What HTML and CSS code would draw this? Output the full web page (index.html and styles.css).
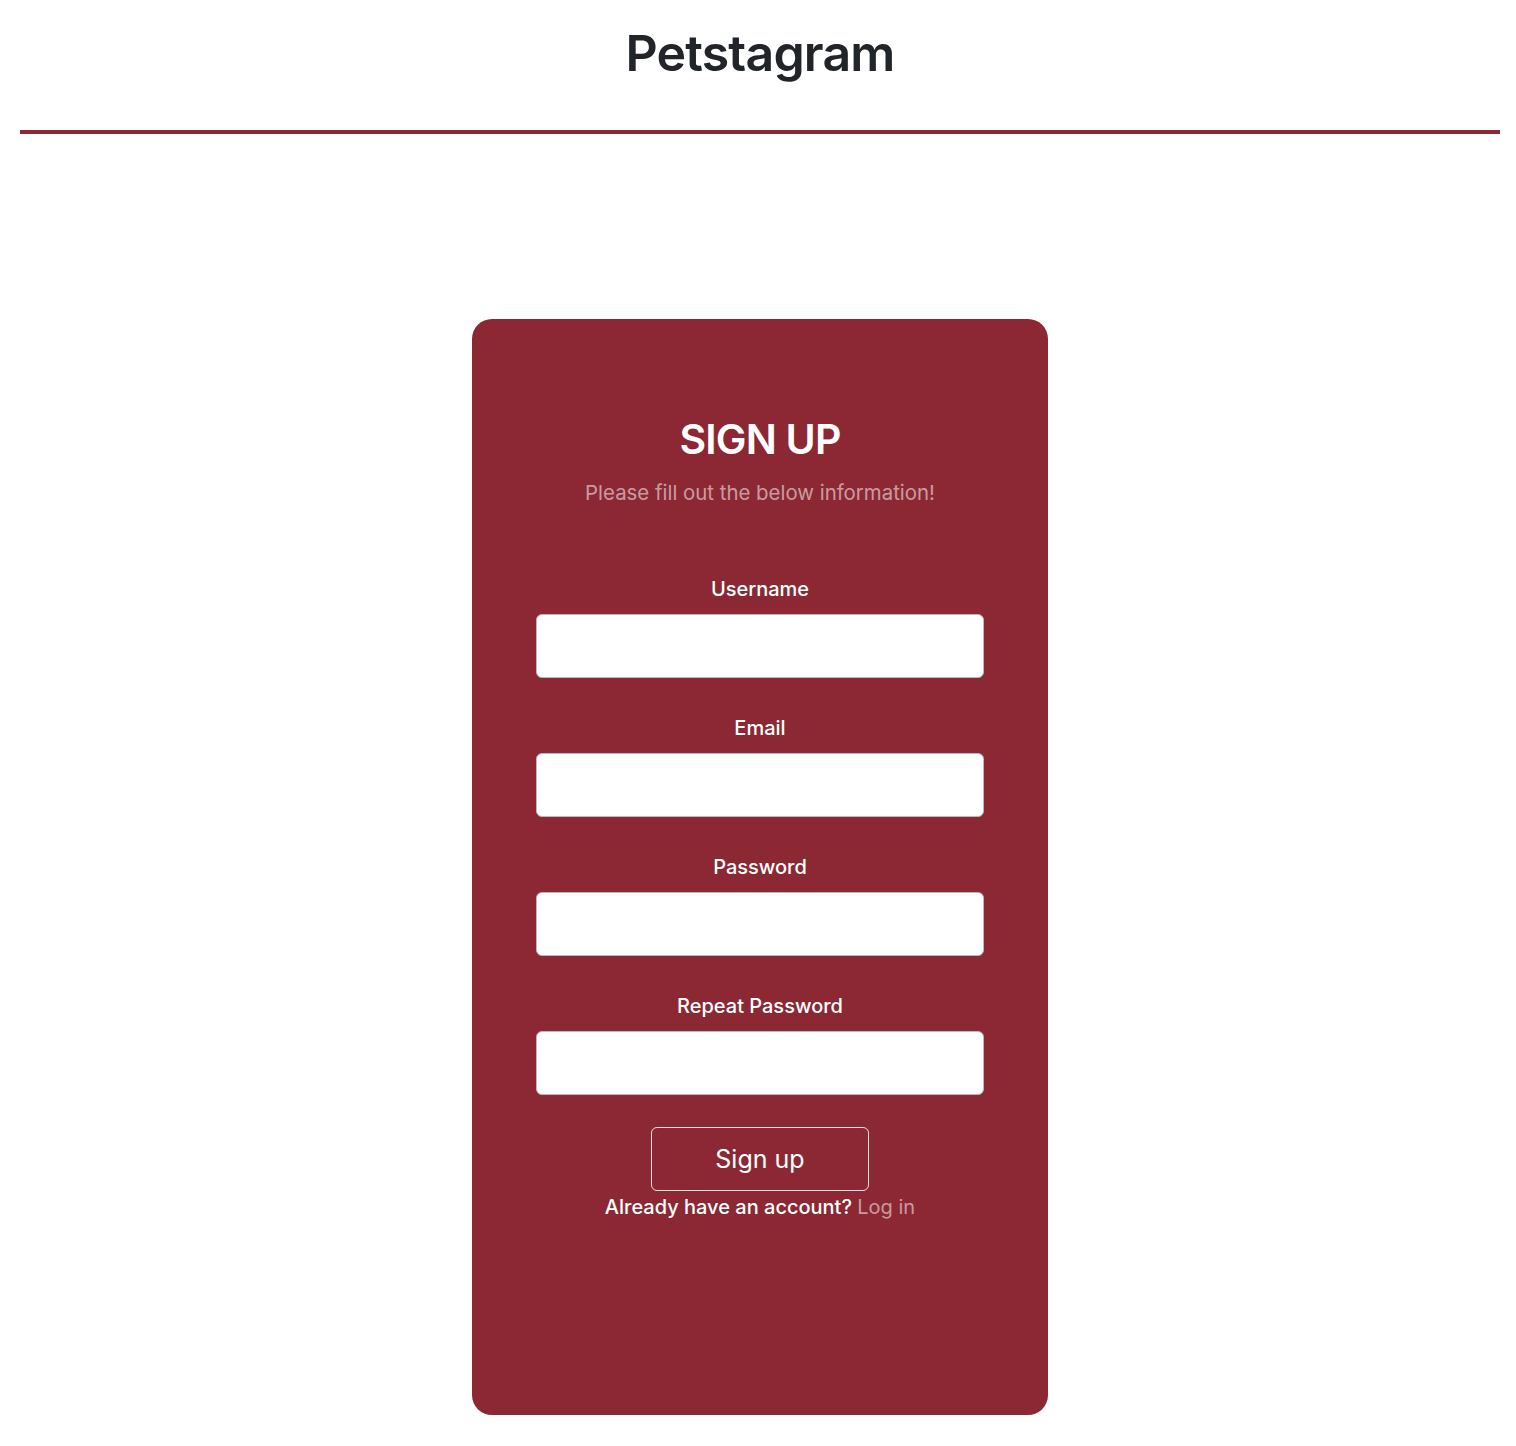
FILE: index.html
```html
<!DOCTYPE html>
<html lang="en">
<head>
<meta charset="utf-8">
<title>Petstagram - Sign up</title>
<link rel="stylesheet" href="styles.css">
</head>
<body>
<div class="page">
  <header class="site-header">
    <h1 class="brand">Petstagram</h1>
    <div class="rule"></div>
  </header>
  <main class="main">
    <section class="card">
      <h2 class="card-title">SIGN UP</h2>
      <p class="card-sub">Please fill out the below information!</p>
      <form class="form">
        <div class="field">
          <label class="label" for="username">Username</label>
          <input class="input" id="username" type="text">
        </div>
        <div class="field">
          <label class="label" for="email">Email</label>
          <input class="input" id="email" type="email">
        </div>
        <div class="field">
          <label class="label" for="password">Password</label>
          <input class="input" id="password" type="password">
        </div>
        <div class="field">
          <label class="label" for="password2">Repeat Password</label>
          <input class="input" id="password2" type="password">
        </div>
        <button class="btn" type="button">Sign up</button>
        <p class="alt">Already have an account? <a class="alt-link" href="#">Log in</a></p>
      </form>
    </section>
  </main>
</div>
</body>
</html>
```
FILE: styles.css
```css
* { box-sizing: border-box; }
html, body { margin: 0; padding: 0; background: #fff; }
body {
  font-family: Inter, "Noto Sans", "Liberation Sans", sans-serif;
  color: #212529;
}
.page {
  margin: 0 16px 0 20px;
}
.site-header {
  display: flex;
  flex-direction: column;
  align-items: center;
}
.brand {
  margin: 23px 0 0;
  font-size: 50px;
  font-weight: 600;
  line-height: 1.2;
  color: #212529;
  letter-spacing: -0.8px;
}
.rule {
  align-self: stretch;
  height: 4px;
  background: #8b2833;
  margin-top: 47px;
}
.main {
  display: flex;
  justify-content: center;
  padding-top: 185px;
  padding-bottom: 31px;
}
.card {
  width: 576px;
  height: 1096px;
  background: #8b2833;
  border-radius: 20px;
  padding: 96px 64px 0;
  display: flex;
  flex-direction: column;
  align-items: center;
  color: #fff;
}
.card-title {
  margin: 0 0 2px;
  font-size: 41px;
  font-weight: 600;
  line-height: 1.2;
  letter-spacing: -0.8px;
}
.card-sub {
  margin: 12px 0 0;
  font-size: 20.4px;
  line-height: 30px;
  color: rgba(255,255,255,0.55);
}
.form {
  align-self: stretch;
  margin-top: 66px;
  display: flex;
  flex-direction: column;
  align-items: center;
}
.field {
  align-self: stretch;
  display: flex;
  flex-direction: column;
  align-items: center;
  margin-bottom: 35px;
}
.field:last-of-type { margin-bottom: 32px; }
.label {
  font-size: 20px;
  line-height: 30px;
  font-weight: 500;
  margin-bottom: 10px;
}
.input {
  width: 100%;
  height: 64px;
  border: 1px solid #b9b9bf;
  border-radius: 6px;
  background: #fff;
  font: inherit;
}
.btn {
  width: 218px;
  height: 64px;
  background: transparent;
  border: 1px solid rgba(255,255,255,0.85);
  border-radius: 6px;
  color: #fff;
  font-family: inherit;
  font-size: 25px;
  font-weight: 400;
}
.alt {
  margin: 1px 0 0;
  font-size: 20px;
  line-height: 30px;
  font-weight: 500;
}
.alt-link {
  color: rgba(255,255,255,0.55);
  text-decoration: none;
  font-weight: 400;
}
```
